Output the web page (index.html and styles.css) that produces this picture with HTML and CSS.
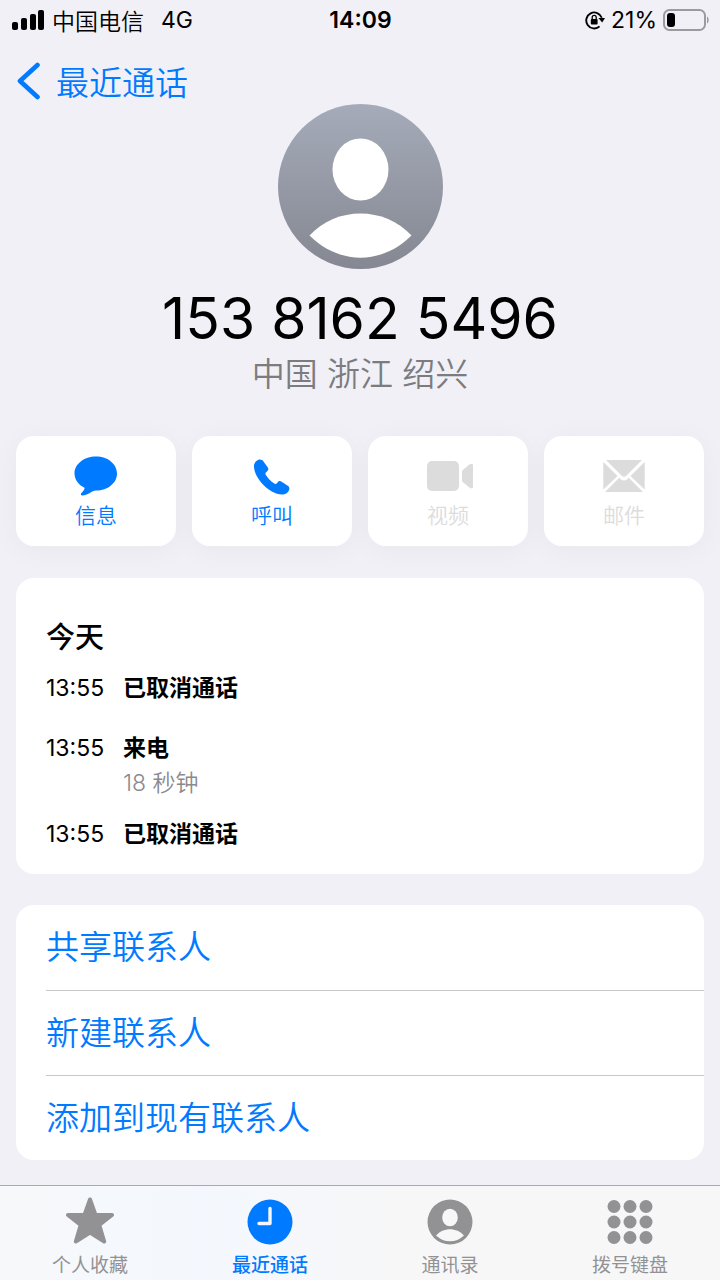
FILE: index.html
```html
<!DOCTYPE html>
<html lang="zh-CN">

<head>
    <title>最近通话</title>
    <meta charset="UTF-8">
    <meta name="viewport" content="width=device-width, initial-scale=1">
    <link rel="stylesheet" href="styles.css">
</head>

<body>
    <div class="status">
        <div class="status-left">
            <svg width="32" height="20" viewBox="0 0 32 20">
                <rect x="0" y="12" width="6" height="8" rx="2" />
                <rect x="9" y="8" width="6" height="12" rx="2" />
                <rect x="18" y="4" width="6" height="16" rx="2" />
                <rect x="26" y="0" width="6" height="20" rx="2" />
            </svg>
            <span class="carrier">中国电信</span>
            <span>4G</span>
        </div>
        <time class="clock">14:09</time>
        <div class="status-right">
            <svg width="20" height="20" viewBox="0 0 20 20">
                <path d="M14.6 16.4A8 8 0 1 1 16.8 7.8" fill="none" stroke="#000" stroke-width="1.9" />
                <path d="M13.4 8H20l-2.8 4.6z" />
                <rect x="5.8" y="9" width="6.8" height="5.4" rx="1" />
                <path d="M7.2 9.5V7.4a2 2 0 0 1 4 0v2.1" fill="none" stroke="#000" stroke-width="1.3" />
            </svg>
            <span>21%</span>
            <svg width="46" height="22" viewBox="0 0 46 22">
                <rect x="1" y="1" width="41" height="20" rx="5.5" fill="none" stroke="#9b9b9f" stroke-width="2" />
                <rect x="4" y="4" width="8" height="14" rx="3" />
                <path d="M44 7.5c2.2 1 2.2 6 0 7z" fill="#9b9b9f" />
            </svg>
        </div>
    </div>

    <nav class="nav">
        <a class="back" href="#recents">
            <svg width="24" height="38" viewBox="0 0 24 38">
                <path d="M20.5 3 3 19l17.5 16" fill="none" stroke="currentColor" stroke-width="4.6" stroke-linecap="round" stroke-linejoin="round" />
            </svg>
            最近通话
        </a>
    </nav>

    <main>
        <header class="contact">
            <svg width="165" height="165" viewBox="0 0 165 165">
                <defs>
                    <linearGradient id="avatar-fill" x1="0" y1="0" x2="0" y2="1">
                        <stop offset="0" stop-color="#a5abb9" />
                        <stop offset="1" stop-color="#858892" />
                    </linearGradient>
                </defs>
                <circle cx="82.5" cy="82.5" r="82.5" fill="url(#avatar-fill)" />
                <ellipse cx="82.5" cy="65.5" rx="28" ry="31" fill="#fff" />
                <path d="M31.5 131.5C58 102 107 102 133.5 131.5C104 161 61 161 31.5 131.5z" fill="#fff" />
            </svg>
            <h1 class="number">153 8162 5496</h1>
            <p class="place">中国 浙江 绍兴</p>
        </header>

        <div class="actions">
            <button type="button" class="action">
                <svg width="44" height="42" viewBox="0 0 44 42">
                    <path d="M22 1.5C33.8 1.5 43 9 43 18.5S33.8 35.5 22 35.5C19.7 35.5 18 36.8 15.8 38C13 39.5 10 40.8 8 40.5C6.5 40.2 6.5 39 7.5 38C9.5 35.8 11 34 10.5 32.7C4.5 30 .5 24.5 .5 18.5C.5 9 10.2 1.5 22 1.5z" />
                </svg>
                信息
            </button>
            <button type="button" class="action">
                <svg width="44" height="42" viewBox="0 0 44 42">
                    <path d="M4 12C3.5 8 6.5 5.5 8.5 4.8C10.5 4.2 12.5 5 13.5 6.5L17.8 12.5C18.8 14 18.3 15.3 17 16.4C15.8 17.4 14.9 18.2 15.6 19.5C17.5 23 20.8 26.3 24.3 28.6C25.6 29.4 26.5 28.7 27.5 27.4C28.6 26 30.1 25.7 31.6 26.7L37.8 30.8C39.5 32 39.7 33.6 39 35.3C38 37.8 35.3 39.8 31.8 39.6C19.3 39 4.8 24 4 12z" />
                </svg>
                呼叫
            </button>
            <button type="button" class="action" disabled>
                <svg width="44" height="42" viewBox="0 0 44 42" overflow="visible">
                    <rect x="1" y="6" width="32" height="30" rx="5" />
                    <path d="M36 17C36 16 36.3 15.5 37 14.8L43.5 9.5C45.5 8 47 8.5 47 10.5V31.5C47 33.5 45.5 34 43.5 32.5L37 27.2C36.3 26.5 36 26 36 25z" />
                </svg>
                视频
            </button>
            <button type="button" class="action" disabled>
                <svg width="44" height="42" viewBox="0 0 44 42">
                    <path d="M4 5H40L24.5 20.5Q22 23 19.5 20.5z" />
                    <path d="M1.3 7 15.5 21 1.3 34.5zM42.7 7 28.5 21 42.7 34.5z" />
                    <path d="M17.2 22.7 18.5 24Q22 27 25.5 24L26.8 22.7 41 37H3z" />
                </svg>
                邮件
            </button>
        </div>

        <section class="card history">
            <h2 class="day">今天</h2>
            <ul class="calls">
                <li class="call">
                    <time>13:55</time>
                    <div class="kind">已取消通话</div>
                </li>
                <li class="call">
                    <time>13:55</time>
                    <div class="kind">来电</div>
                    <div class="duration">18 秒钟</div>
                </li>
                <li class="call">
                    <time>13:55</time>
                    <div class="kind">已取消通话</div>
                </li>
            </ul>
        </section>

        <section class="card links">
            <a href="#share">共享联系人</a>
            <a href="#new">新建联系人</a>
            <a href="#add">添加到现有联系人</a>
        </section>
    </main>

    <nav class="tabs">
        <a class="tab" href="#favorites">
            <svg width="50" height="48" viewBox="0 0 50 48">
                <path d="M25 2.5 30.5 18H47L34.3 28 39.2 44.5 25 35.5 10.8 44.5 15.7 28 3 18H19.5z" fill="currentColor" stroke="currentColor" stroke-width="4" stroke-linejoin="round" />
            </svg>
            个人收藏
        </a>
        <a class="tab active" href="#recents">
            <svg width="46" height="48" viewBox="0 0 46 48">
                <circle cx="23" cy="25" r="22.5" fill="currentColor" />
                <path d="M23 11.5V26.5H12" fill="none" stroke="#f4f8fe" stroke-width="3.4" stroke-linecap="round" stroke-linejoin="round" />
            </svg>
            最近通话
        </a>
        <a class="tab" href="#contacts">
            <svg width="46" height="48" viewBox="0 0 46 48">
                <circle cx="23" cy="25" r="22.5" fill="currentColor" />
                <ellipse cx="23" cy="20.5" rx="7.8" ry="8.7" fill="#f7f7f8" />
                <path d="M9 38.5C16 30 30 30 37 38.5C29 46.3 17 46.3 9 38.5z" fill="#f7f7f8" />
            </svg>
            通讯录
        </a>
        <a class="tab" href="#keypad">
            <svg width="46" height="48" viewBox="0 0 46 48" fill="currentColor">
                <circle cx="7" cy="9.5" r="6.5" />
                <circle cx="23" cy="9.5" r="6.5" />
                <circle cx="39" cy="9.5" r="6.5" />
                <circle cx="7" cy="25" r="6.5" />
                <circle cx="23" cy="25" r="6.5" />
                <circle cx="39" cy="25" r="6.5" />
                <circle cx="7" cy="40.5" r="6.5" />
                <circle cx="23" cy="40.5" r="6.5" />
                <circle cx="39" cy="40.5" r="6.5" />
            </svg>
            拨号键盘
        </a>
    </nav>
</body>

</html>
```
FILE: styles.css
```css
* {
    box-sizing: border-box;
}
body {
    display: flex;
    flex-direction: column;
    min-height: 100vh;
    margin: 0;
    background: #f1f0f6;
    color: #000;
    font-family: Inter, "Noto Sans CJK SC", sans-serif;
}
a {
    color: #007aff;
    text-decoration: none;
}
svg {
    display: block;
    flex: none;
}

.status {
    display: grid;
    grid-template-columns: 1fr auto 1fr;
    align-items: center;
    height: 40px;
    padding: 0 11px 0 12px;
    font-size: 23px;
}
.status-left, .status-right {
    display: flex;
    align-items: center;
}
.status-left {
    gap: 8px;
}
.status-right {
    justify-content: flex-end;
    gap: 6px;
}
.carrier {
    margin-right: 9px;
    font-weight: 350;
}
.clock {
    font-weight: 600;
}

.nav {
    padding: 20px 17px 0;
}
.back {
    display: flex;
    align-items: center;
    gap: 15px;
    width: fit-content;
    height: 42px;
    font-size: 33px;
    font-weight: 350;
}

.contact {
    display: flex;
    flex-direction: column;
    align-items: center;
    margin-top: 2px;
}
.number {
    margin: 15px 0 0;
    font-size: 57px;
    font-weight: 400;
    line-height: 70px;
}
.place {
    margin: 0;
    color: #7c7c80;
    font-size: 33px;
    font-weight: 350;
    line-height: 40px;
}

.actions {
    display: grid;
    grid-template-columns: repeat(4, 1fr);
    gap: 16px;
    margin: 42px 16px 32px;
}
.action {
    display: flex;
    flex-direction: column;
    align-items: center;
    height: 110px;
    padding: 19px 0 0;
    border: 0;
    border-radius: 18px;
    background: #fff;
    box-shadow: 0 4px 30px rgba(0, 0, 0, 0.04);
    color: #007aff;
    fill: currentColor;
    font-family: inherit;
    font-size: 21px;
    font-weight: 350;
    line-height: 38px;
}
.action:disabled {
    color: #dcdcdc;
}

.card {
    position: relative;
    margin: 0 16px 31px;
    border-radius: 18px;
    background: #fff;
}
.history {
    padding: 40px 30px 18px;
}
.day {
    margin: 0 0 8px;
    font-size: 29px;
    font-weight: 500;
    line-height: 40px;
}
.calls {
    display: flex;
    flex-direction: column;
    gap: 16px;
    margin: 0;
    padding: 0;
    list-style: none;
}
.call {
    display: grid;
    grid-template-columns: 77px 1fr;
    font-size: 23px;
    line-height: 44px;
}
.kind {
    font-weight: 600;
}
.duration {
    grid-column: 2;
    color: #8a8a8e;
    font-weight: 350;
    line-height: 26px;
}

.links {
    margin-bottom: 24px;
    padding-left: 30px;
}
.links a {
    display: block;
    height: 85px;
    font-size: 33px;
    font-weight: 350;
    line-height: 84px;
}
.links a + a {
    border-top: 1px solid #c8c8ca;
}

.tabs {
    display: grid;
    grid-template-columns: repeat(4, 1fr);
    margin-top: auto;
    border-top: 1px solid #a9a9b0;
    background: linear-gradient(to right, #f7f8fa, #f4f8fe 28%, #f7f7f8 55%);
}
.tab {
    display: flex;
    flex-direction: column;
    align-items: center;
    gap: 7px;
    padding-top: 11px;
    color: #929295;
    font-size: 19px;
    font-weight: 400;
    line-height: 28px;
}
.tab.active {
    color: #007aff;
    font-weight: 500;
}
```
